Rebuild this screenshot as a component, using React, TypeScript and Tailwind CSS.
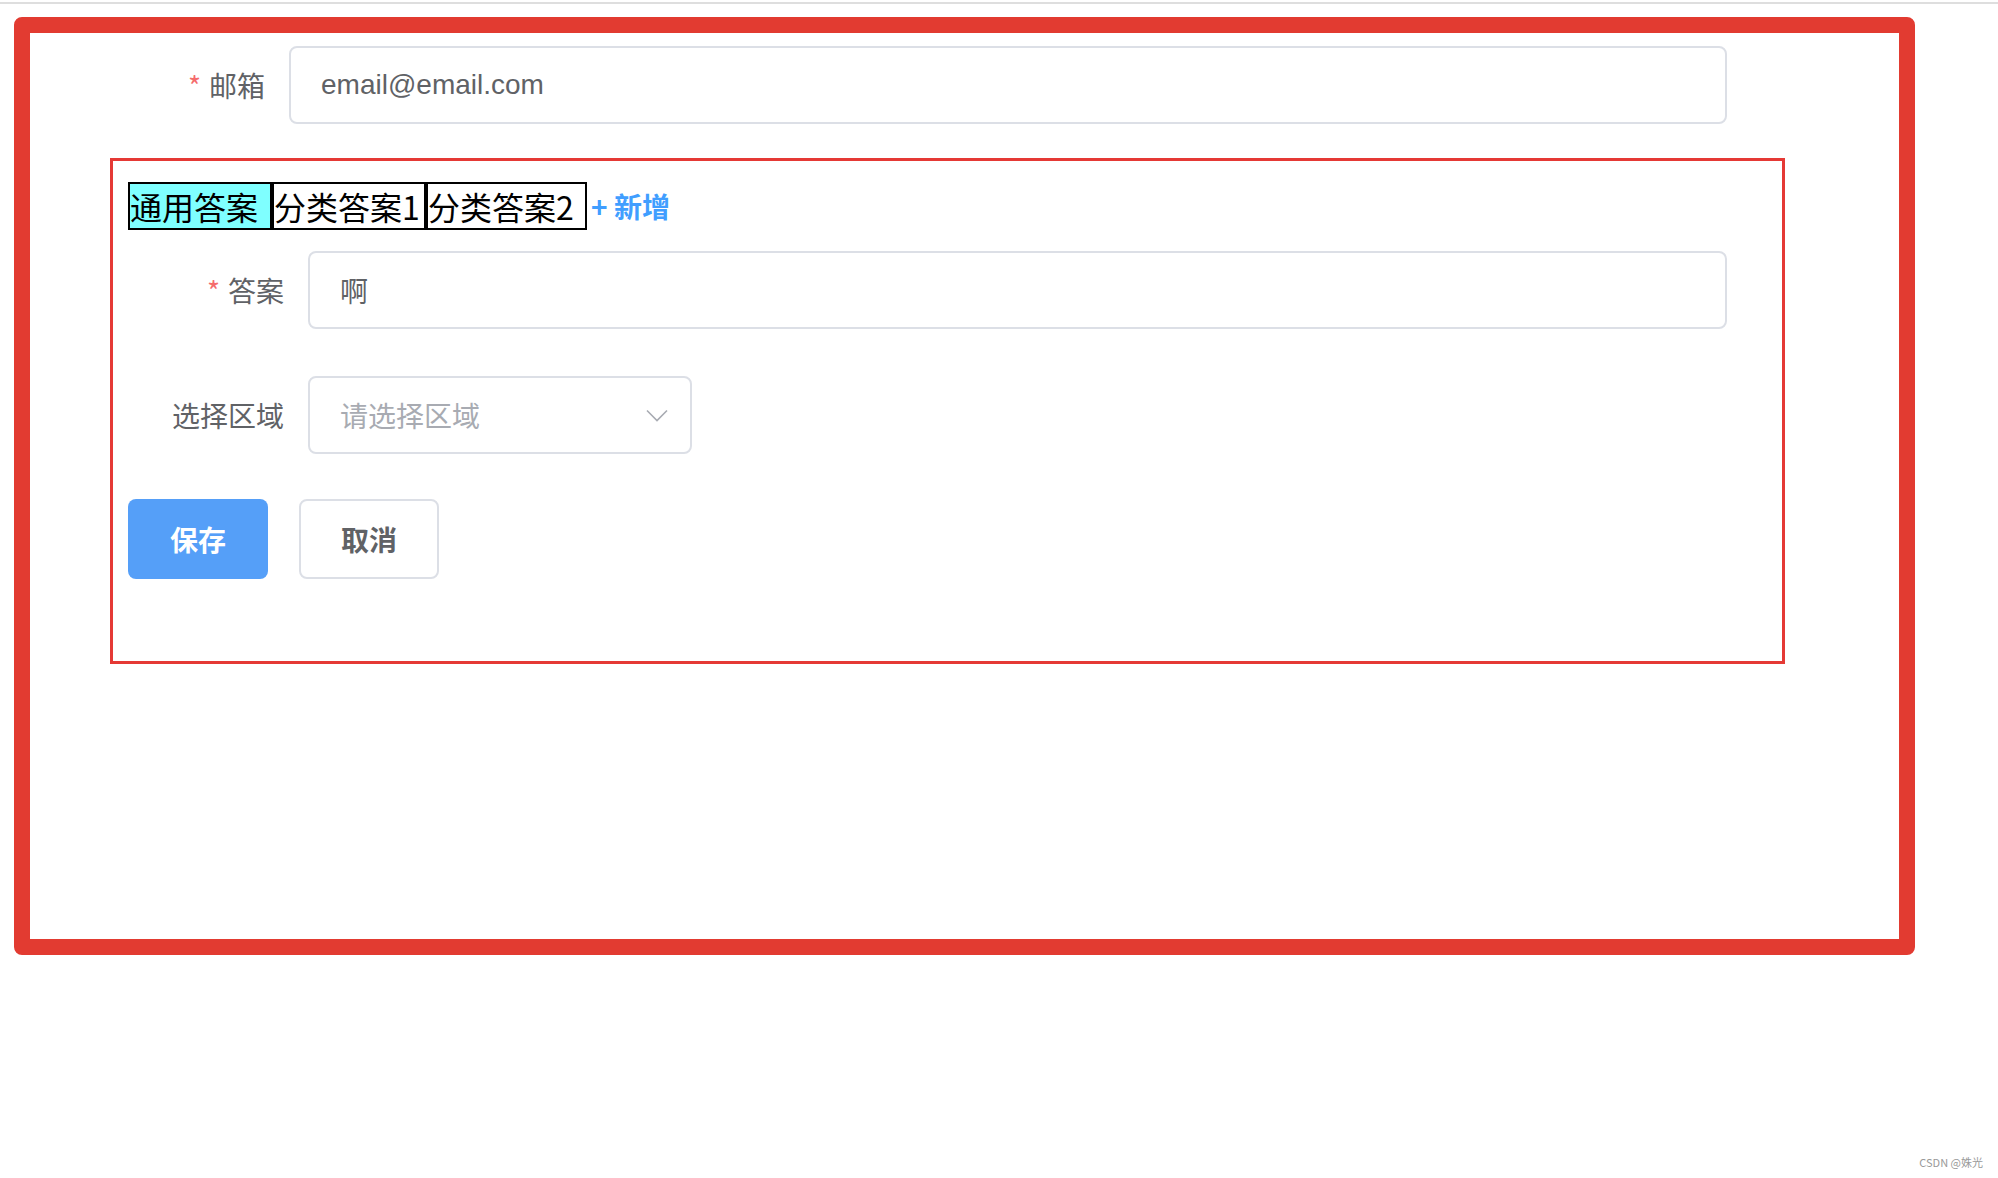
const cjk = "font-['Noto_Sans_CJK_SC','Noto_Sans',sans-serif]"
const latin = "font-['Liberation_Sans','Noto_Sans_CJK_SC',sans-serif]"

function Label({ text, required, width }: { text: string; required?: boolean; width: string }) {
  return (
    <div className={`${width} flex shrink-0 items-center justify-end pr-[24px] text-[28px] text-[#606266] ${cjk}`}>
      {required && <span className="mr-[8px] text-[#f56c6c]">*</span>}
      {text}
    </div>
  )
}

// thin arrow like element-plus select suffix
function Arrow() {
  return (
    <svg width="22" height="13" viewBox="0 0 22 13" fill="none" className="shrink-0">
      <path d="M1 1.5 L11 11.5 L21 1.5" stroke="#a8abb2" strokeWidth="1.6" />
    </svg>
  )
}

export default function App() {
  const tabs = [
    { name: "通用答案", w: "w-[144px]", active: true },
    { name: "分类答案1", w: "w-[154px]", active: false },
    { name: "分类答案2", w: "w-[161px]", active: false },
  ]

  return (
    <div className="relative h-[1178px] w-[1998px] overflow-hidden bg-white">
      <div className="h-[2px]" />
      <div className="h-[2px] bg-[#dedede]" />

      <div className="ml-[14px] mt-[13px] h-[938px] w-[1901px] rounded-[8px] border-[16px] border-[#e23b31] pt-[13px]">
        <div className="flex h-[78px] items-center">
          <Label text="邮箱" required width="w-[259px]" />
          <div className={`flex h-[78px] w-[1438px] items-center rounded-[8px] border-2 border-[#dcdfe6] px-[30px] text-[28px] text-[#606266] ${latin}`}>
            email@email.com
          </div>
        </div>

        <div className="ml-[80px] mt-[34px] h-[506px] w-[1675px] border-[3px] border-[#e53935] pl-[15px] pt-[21px]">
          <div className="flex h-[48px] items-center">
            {tabs.map((t) => (
              <span
                key={t.name}
                className={`${t.w} flex h-[48px] items-center border-2 border-black text-[32px] leading-none text-black ${cjk} ${
                  t.active ? "bg-[#7fffff]" : "bg-white"
                }`}
              >
                {t.name}
              </span>
            ))}
            <span className={`ml-[4px] text-[28px] font-bold text-[#409eff] ${cjk}`}>+ 新增</span>
          </div>

          <div className="mt-[21px] flex h-[78px] items-center">
            <Label text="答案" required width="w-[180px]" />
            <div className={`flex h-[78px] w-[1419px] items-center rounded-[8px] border-2 border-[#dcdfe6] px-[30px] text-[28px] text-[#606266] ${cjk}`}>
              啊
            </div>
          </div>

          <div className="mt-[47px] flex h-[78px] items-center">
            <Label text="选择区域" width="w-[180px]" />
            <div className={`flex h-[78px] w-[384px] items-center justify-between rounded-[8px] border-2 border-[#dcdfe6] pl-[30px] pr-[22px] text-[28px] text-[#a8abb2] ${cjk}`}>
              请选择区域
              <Arrow />
            </div>
          </div>

          <div className="mt-[45px] flex items-center gap-[31px]">
            <button className={`flex h-[80px] w-[140px] items-center justify-center rounded-[8px] bg-[#559ff8] text-[28px] font-semibold text-white ${cjk}`}>
              保存
            </button>
            <button className={`flex h-[80px] w-[140px] items-center justify-center rounded-[8px] border-2 border-[#dcdfe6] bg-white text-[28px] font-semibold text-[#606266] ${cjk}`}>
              取消
            </button>
          </div>
        </div>
      </div>

      <span className={`absolute bottom-[8px] right-[15px] text-[11px] text-[#999] ${cjk}`}>CSDN @姝光</span>
    </div>
  )
}
